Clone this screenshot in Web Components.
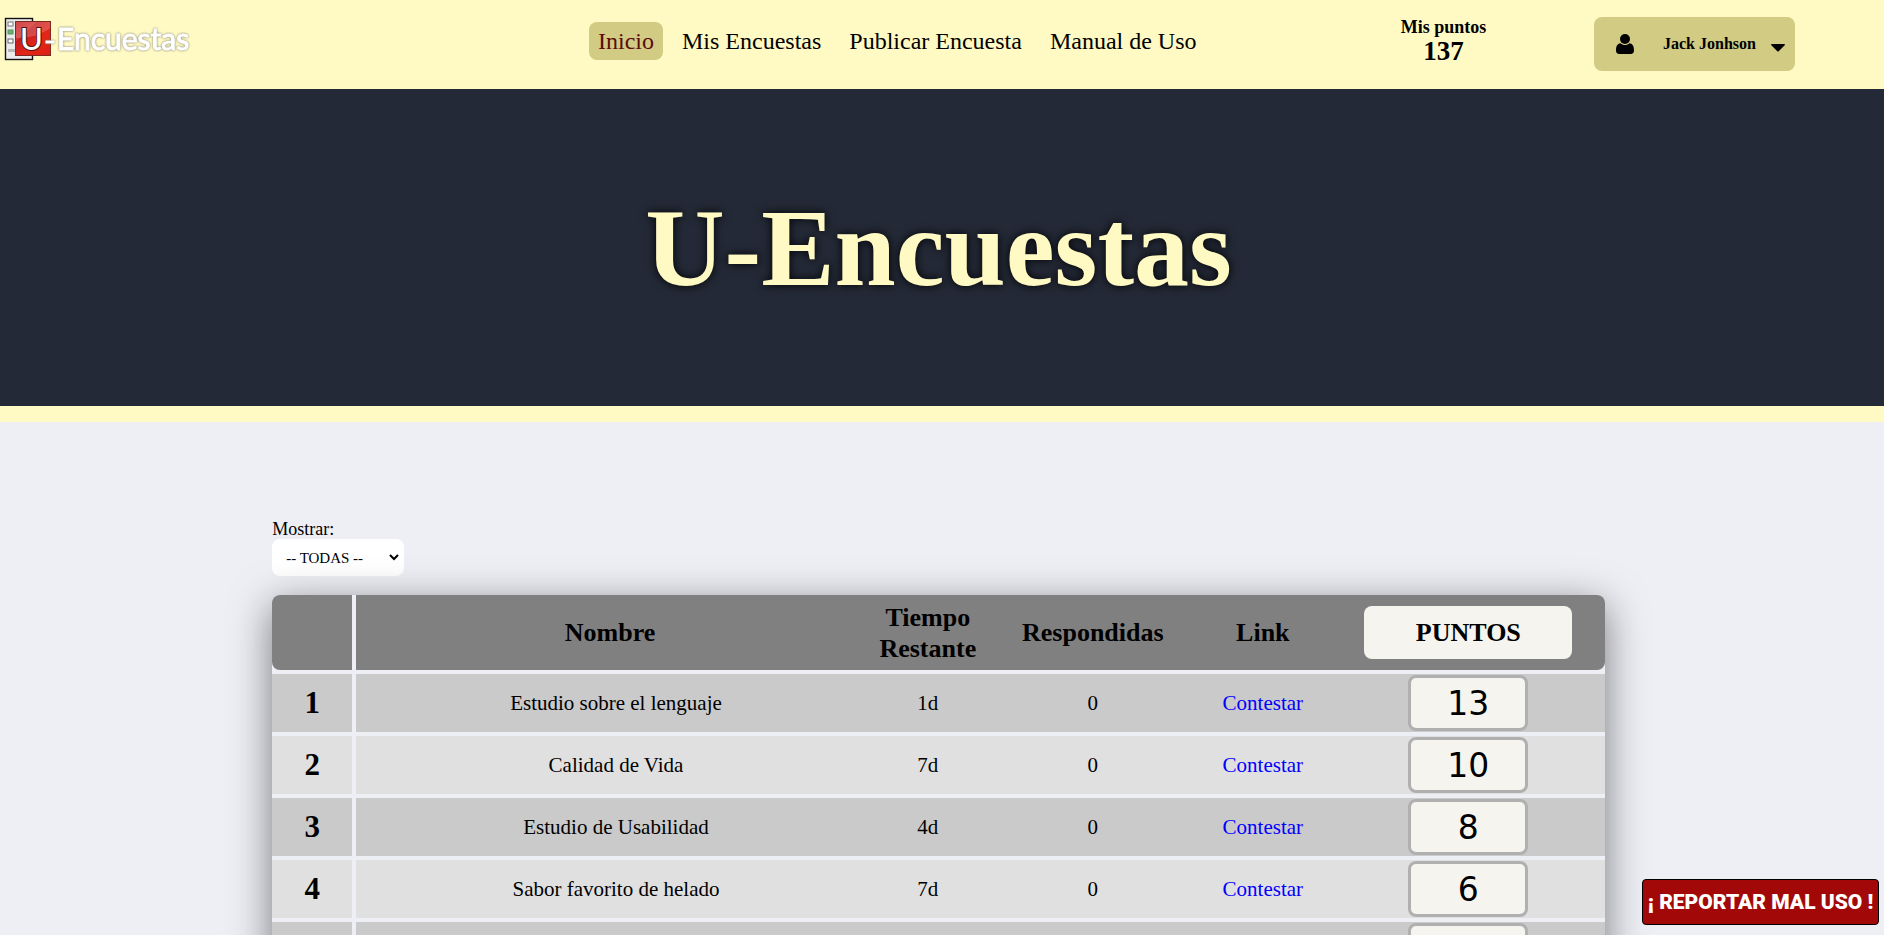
<!DOCTYPE html>
<html lang="es">
<head>
<meta charset="utf-8">
<meta name="viewport" content="width=device-width, initial-scale=1">
<title>U-Encuestas</title>
<style>
  :root {
    --cream: #fffac3;
    --olive: #d2cb84;
    --navy: #232936;
    --page: #eeeff5;
    --paper: #f5f4ee;
    --gutter: 7px;
  }
  body {
    margin: 0;
    background: var(--page);
    color: #000;
    font-family: "Liberation Serif", "Times New Roman", serif;
    font-size: 16px;
  }
</style>
</head>
<body>
<ue-header>
  <ue-logo slot="logo"></ue-logo>
  <ue-nav-link slot="nav" href="#inicio" active>Inicio</ue-nav-link>
  <ue-nav-link slot="nav" href="#mis-encuestas">Mis Encuestas</ue-nav-link>
  <ue-nav-link slot="nav" href="#publicar">Publicar Encuesta</ue-nav-link>
  <ue-nav-link slot="nav" href="#manual">Manual de Uso</ue-nav-link>
  <ue-points slot="points" value="137">Mis puntos</ue-points>
  <ue-user-menu slot="user">Jack Jonhson</ue-user-menu>
</ue-header>
<ue-banner>U-Encuestas</ue-banner>
<ue-main>
  <ue-filter></ue-filter>
  <ue-survey-table></ue-survey-table>
</ue-main>
<ue-report-button>¡ REPORTAR MAL USO !</ue-report-button>

<script>
const define = (name, markup, setup) => {
  const template = document.createElement('template');
  template.innerHTML = markup;
  customElements.define(name, class extends HTMLElement {
    constructor() {
      super();
      this.attachShadow({ mode: 'open' }).append(template.content.cloneNode(true));
    }
    connectedCallback() {
      if (setup) setup(this, this.shadowRoot);
    }
  });
};

define('ue-header', `
  <style>
    :host { display: block; background: var(--cream); }
    header {
      display: grid;
      grid-template-columns: 589fr 704fr 301fr 201px 82px;
      height: 89px;
      padding-right: var(--gutter);
    }
    .logo { padding: 16px 0 0 4px; }
    nav { display: flex; gap: 10px; align-items: flex-start; padding-top: 22px; white-space: nowrap; }
    .points { padding-top: 17px; }
    .user { padding-top: 17px; }
  </style>
  <header>
    <div class="logo"><slot name="logo"></slot></div>
    <nav><slot name="nav"></slot></nav>
    <div class="points"><slot name="points"></slot></div>
    <div class="user"><slot name="user"></slot></div>
  </header>`);

define('ue-logo', `
  <style>
    :host { display: block; }
    svg { display: block; }
    text { font-family: Lato, "Open Sans", sans-serif; }
    .word { fill: #fff; stroke: #fff; stroke-width: 1; filter: drop-shadow(0 0 1px #77756a); }
  </style>
  <svg width="192" height="48" viewBox="0 0 192 48" role="img" aria-label="U-Encuestas">
    <defs>
      <linearGradient id="red" x1="0" y1="0" x2="1" y2="1">
        <stop offset="0" stop-color="#c4191b"/><stop offset=".3" stop-color="#d4302c"/>
        <stop offset=".31" stop-color="#c41c1c"/><stop offset=".6" stop-color="#e42618"/>
        <stop offset="1" stop-color="#dd2014"/>
      </linearGradient>
    </defs>
    <rect x="1.5" y="2.5" width="27" height="41" fill="#ececee" stroke="#111" stroke-width="1.4"/>
    <rect x="4" y="6" width="5" height="4" fill="#fff" stroke="#777"/>
    <rect x="4" y="14" width="5" height="4" fill="#64b86c" stroke="#5a8f60"/>
    <rect x="4" y="23" width="5" height="4" fill="#fff" stroke="#666"/>
    <rect x="4" y="33" width="7" height="3" fill="#b9b9b9"/>
    <rect x="11.5" y="5.500" width="35" height="34" fill="url(#red)" stroke="#7c2a22"/>
    <path d="M12 6h34v6c-9 7-21 10-34 10z" fill="#fff" opacity=".2"/>
    <text x="16" y="34" font-size="31" font-weight="500" fill="#fff" stroke="#4d1612" stroke-width="2" paint-order="stroke">U</text>
    <rect class="word" x="42" y="25" width="8" height="2"/>
    <text class="word" x="53" y="34" font-size="30">Encuestas</text>
  </svg>`);

define('ue-nav-link', `
  <style>
    :host { display: block; }
    a {
      display: block;
      padding: 0 9px;
      border-radius: 8px;
      color: #000;
      font-size: 24px;
      line-height: 38px;
      text-decoration: none;
    }
    :host([active]) a { background: var(--olive); color: #5d0a0a; }
  </style>
  <a><slot></slot></a>`,
  (host, root) => { root.querySelector('a').href = host.getAttribute('href'); });

define('ue-points', `
  <style>
    :host { display: block; text-align: center; font-weight: bold; }
    .label { font-size: 18px; line-height: 20px; }
    .value { font-size: 27px; line-height: 28px; }
  </style>
  <div class="label"><slot></slot></div>
  <div class="value"></div>`,
  (host, root) => { root.querySelector('.value').textContent = host.getAttribute('value'); });

define('ue-user-menu', `
  <style>
    :host { display: block; }
    button {
      display: grid;
      grid-template-columns: 47px 1fr 13px;
      align-items: center;
      width: 100%;
      height: 54px;
      padding: 0 11px 0 22px;
      border: 0;
      border-radius: 8px;
      background: var(--olive);
      color: #000;
      font: bold 16px "Liberation Serif", serif;
      text-align: left;
      white-space: nowrap;
    }
    svg { display: block; }
    .caret { margin-top: 8px; }
  </style>
  <button type="button">
    <svg width="18" height="20" viewBox="0 0 18 20" aria-hidden="true">
      <circle cx="9" cy="5" r="5"/>
      <path d="M4.500 9.200C1.200 9.500 0 12.500 0 16.500 0 18.500 1.200 20 3.200 20h11.600c2 0 3.200-1.500 3.200-3.500 0-4-1.200-7-4.500-7.300C12.200 10.400 10.700 11 9 11s-3.200-.6-4.500-1.800z"/>
    </svg>
    <span><slot></slot></span>
    <svg class="caret" width="14" height="8" viewBox="0 0 14 8" aria-hidden="true"><path d="M.8 0h12.400c.8 0 1 .7.5 1.200L7.700 7.300c-.4.400-1 .400-1.400 0L.3 1.200C-.2.700 0 0 .8 0z"/></svg>
  </button>`);

define('ue-banner', `
  <style>
    :host { display: block; background: var(--navy); border-bottom: 16px solid var(--cream); }
    div { display: flex; align-items: center; justify-content: center; height: 317px; padding-right: var(--gutter); }
    h1 { margin: 0; color: var(--cream); font-size: 110px; line-height: 120px; text-shadow: 0 0 10px #000; }
  </style>
  <div><h1><slot></slot></h1></div>`);

define('ue-main', `
  <style>
    :host { display: block; padding: 97px var(--gutter) 0 0; }
    main { width: 71%; margin: 0 auto; }
  </style>
  <main><slot></slot></main>`);

define('ue-filter', `
  <style>
    :host { display: block; margin-bottom: 19px; }
    label { display: block; font-size: 18px; line-height: 20px; }
    select {
      display: block;
      width: 132px;
      height: 37px;
      padding: 0 0 0 8px;
      border: 2px solid #fff;
      border-radius: 8px;
      background-color: #fff;
      color: #000;
      font: 15px "Liberation Serif", serif;
    }
  </style>
  <label for="show">Mostrar:</label>
  <select id="show"><option>-- TODAS --</option></select>`);

define('ue-survey-table', `
  <style>
    :host { display: block; border-radius: 8px; box-shadow: 0 10px 40px rgba(0, 0, 0, .5); }
    table {
      width: 100%;
      table-layout: fixed;
      border-collapse: separate;
      border-spacing: 0;
      border-radius: 8px 8px 0 0;
      background: var(--page);
      text-align: center;
    }
    th, td { box-sizing: border-box; padding: 0; }
    .rank { width: 84px; border-right: 4px solid var(--page); }
    .time { width: 128px; }
    .answered { width: 202px; }
    .link { width: 138px; }
    .score { width: 273px; }
    thead th { height: 75px; background: #808080; font-size: 26px; line-height: 31px; }
    thead th:first-child { border-radius: 8px 0 0 8px; }
    thead th:last-child { border-radius: 0 8px 8px 0; }
    thead button {
      width: 208px;
      height: 53px;
      padding: 0;
      border: 0;
      border-radius: 8px;
      background: var(--paper);
      color: #000;
      font: bold 26px "Liberation Serif", serif;
      vertical-align: middle;
    }
    tbody th, tbody td { height: 62px; border-top: 4px solid var(--page); font-size: 21px; }
    tbody th { font-size: 31px; }
    tbody .name { padding-left: 12px; }
    tbody tr:nth-child(odd) { background: #cacaca; }
    tbody tr:nth-child(even) { background: #e0e0e0; }
    a { color: #00f; text-decoration: none; }
    .box {
      box-sizing: border-box;
      width: 120px;
      height: 56px;
      margin: 0 auto;
      border: 3px solid #b0b0b0;
      border-radius: 8px;
      background: var(--paper);
      font: 33px/52px "DejaVu Sans", sans-serif;
    }
  </style>
  <table>
    <thead>
      <tr>
        <th class="rank"></th>
        <th class="name">Nombre</th>
        <th class="time">Tiempo Restante</th>
        <th class="answered">Respondidas</th>
        <th class="link">Link</th>
        <th class="score"><button type="button">PUNTOS</button></th>
      </tr>
    </thead>
    <tbody></tbody>
  </table>`,
  (host, root) => {
    const surveys = [
      ['1', 'Estudio sobre el lenguaje', '1d', '0', 'Contestar', '13'],
      ['2', 'Calidad de Vida', '7d', '0', 'Contestar', '10'],
      ['3', 'Estudio de Usabilidad', '4d', '0', 'Contestar', '8'],
      ['4', 'Sabor favorito de helado', '7d', '0', 'Contestar', '6'],
      ['', '', '', '', '', '']
    ];
    root.querySelector('tbody').innerHTML = surveys.map(([n, name, time, count, link, score]) => `
      <tr>
        <th class="rank">${n}</th>
        <td class="name">${name}</td>
        <td>${time}</td>
        <td>${count}</td>
        <td>${link && `<a href="#encuesta-${n}">${link}</a>`}</td>
        <td><div class="box">${score}</div></td>
      </tr>`).join('');
  });

define('ue-report-button', `
  <style>
    :host { display: block; position: fixed; right: 5px; bottom: 10px; }
    button {
      width: 237px;
      height: 46px;
      padding: 0;
      border: 1px solid #000;
      border-radius: 4px;
      background: #a30808;
      color: #fff;
      font: 900 21px Impact, Roboto, sans-serif;
      white-space: nowrap;
    }
  </style>
  <button type="button"><slot></slot></button>`);
</script>
</body>
</html>
